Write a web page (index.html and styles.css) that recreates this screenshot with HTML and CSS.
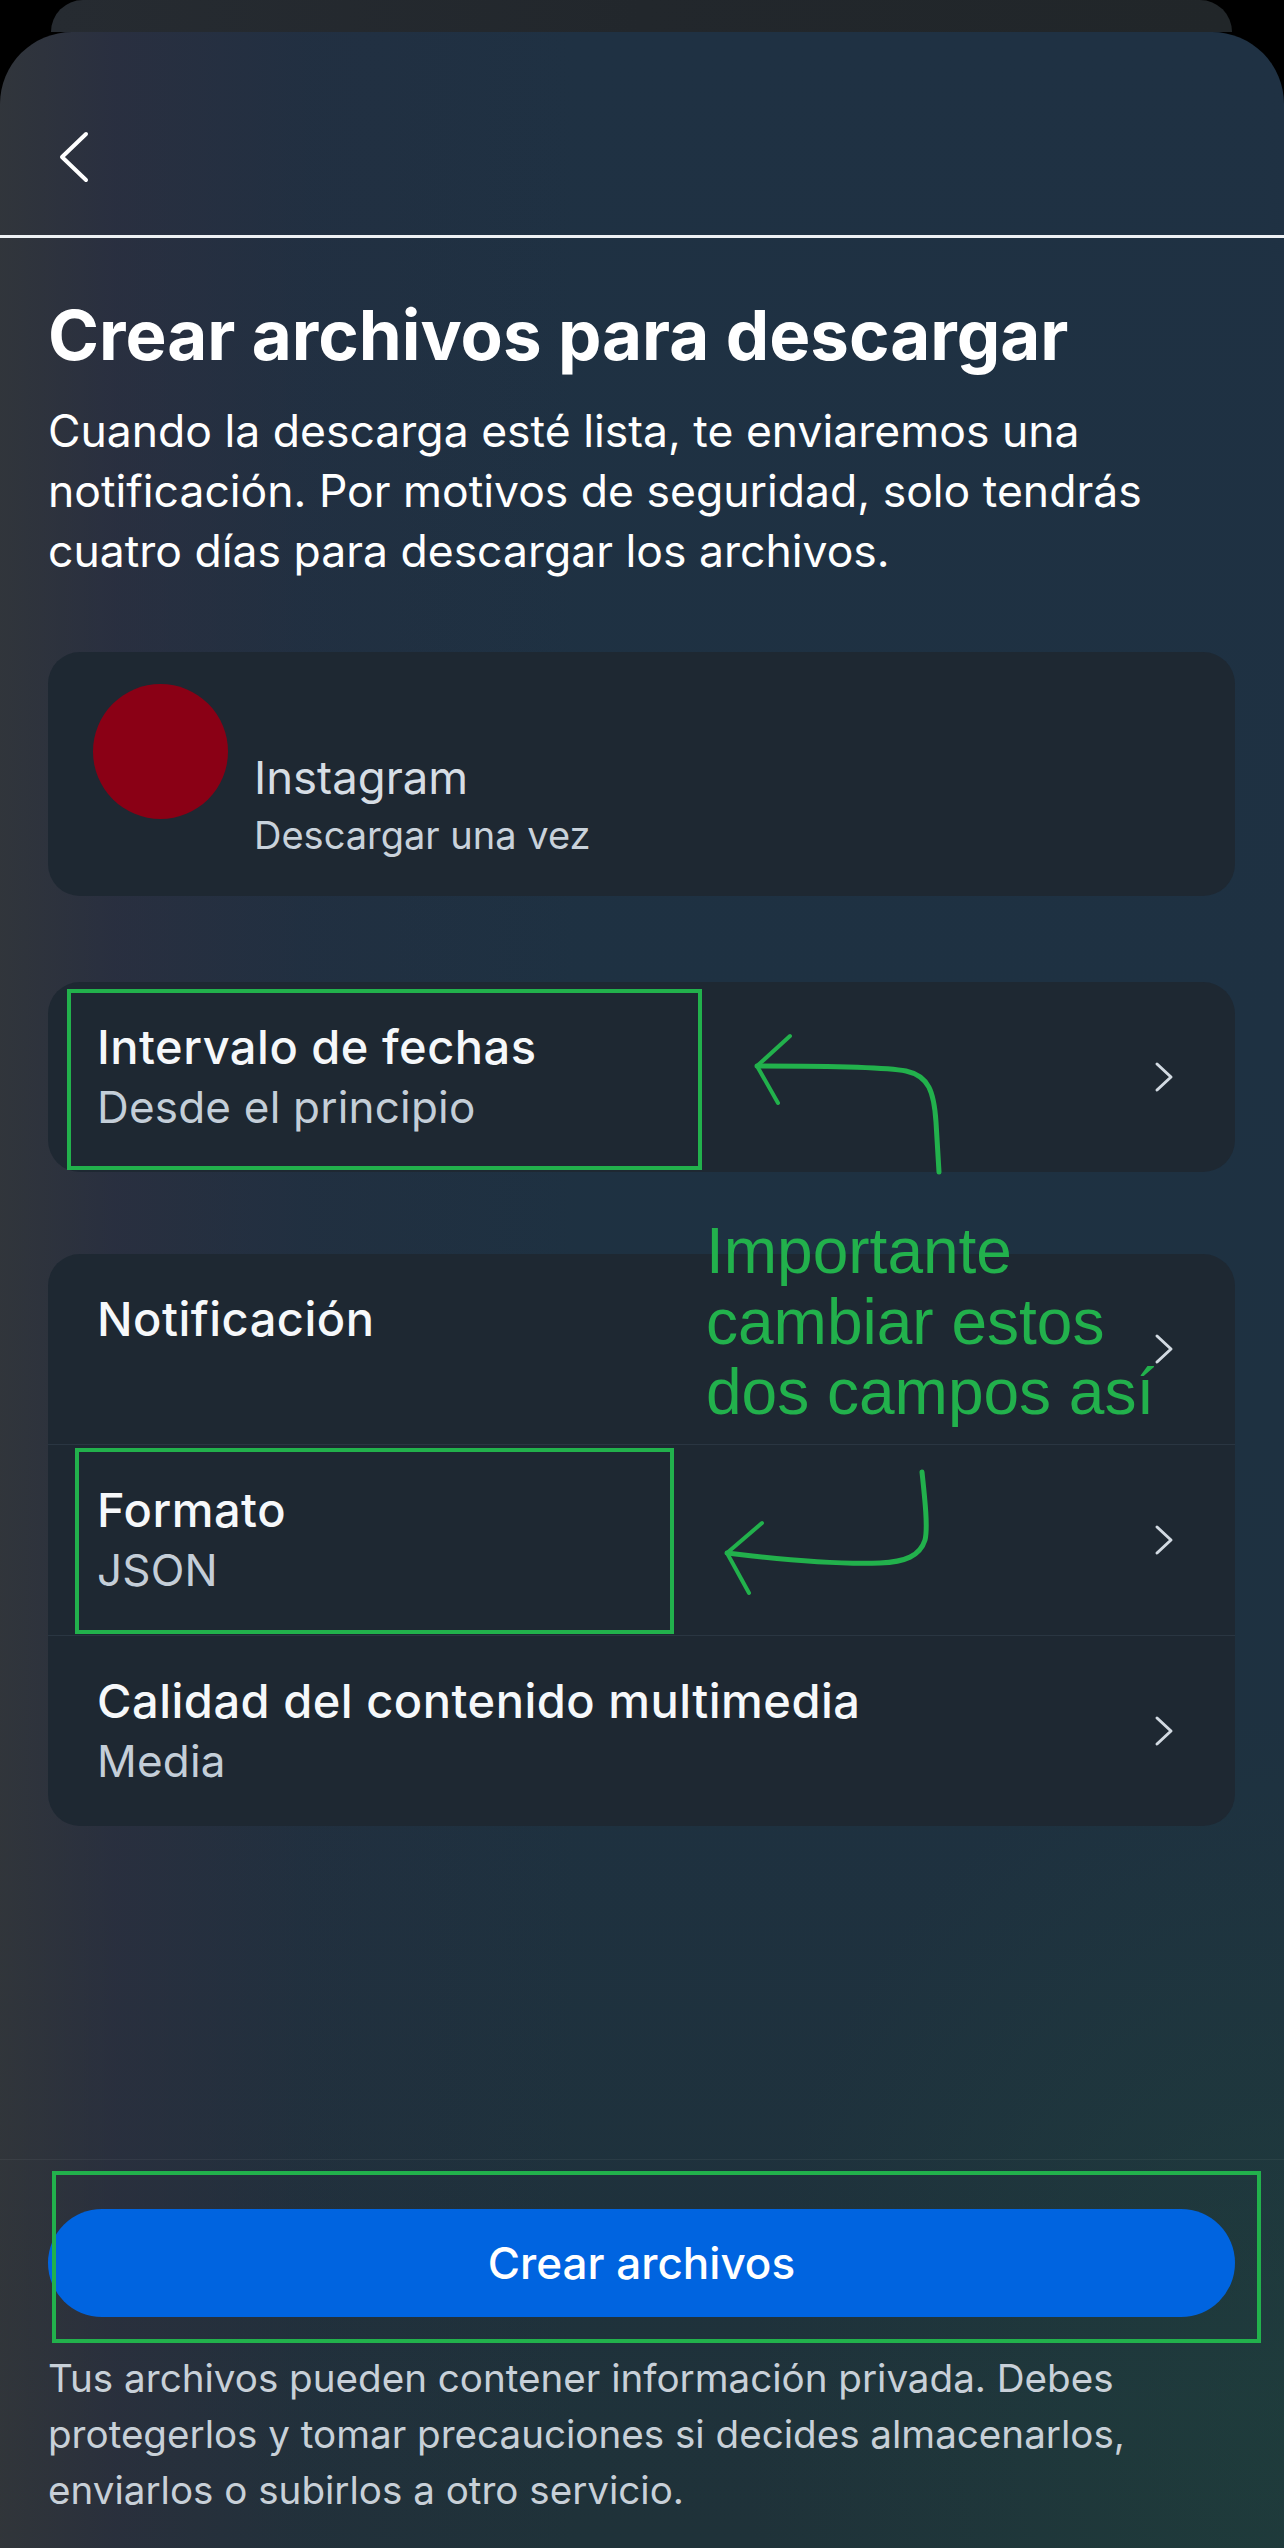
FILE: index.html
```html
<!DOCTYPE html>
<html lang="es">
<head>
<meta charset="utf-8">
<title>Crear archivos para descargar</title>
<link rel="stylesheet" href="styles.css">
</head>
<body>
<div class="screen">
  <div class="peek"></div>
  <main class="sheet">
    <header class="sheet-header">
      <svg class="back" viewBox="0 0 32 52" width="32" height="52" aria-label="Atrás"><path d="M29 3 L5 26 L29 49"/></svg>
    </header>
    <section class="content">
      <h1 class="title">Crear archivos para descargar</h1>
      <p class="lead">Cuando la descarga esté lista, te enviaremos una notificación. Por motivos de seguridad, solo tendrás cuatro días para descargar los archivos.</p>

      <div class="account-card">
        <div class="avatar"></div>
        <div class="account-text">
          <div class="account-name">Instagram</div>
          <div class="account-sub">Descargar una vez</div>
        </div>
      </div>

      <div class="list list-single">
        <div class="row">
          <div class="row-text">
            <div class="row-title">Intervalo de fechas</div>
            <div class="row-sub">Desde el principio</div>
          </div>
          <svg class="chev" viewBox="0 0 20 32" width="20" height="32"><path d="M3 3 L17 16 L3 29"/></svg>
        </div>
      </div>

      <div class="list list-group">
        <div class="row">
          <div class="row-text">
            <div class="row-title">Notificación</div>
            <div class="row-sub">&nbsp;</div>
          </div>
          <svg class="chev" viewBox="0 0 20 32" width="20" height="32"><path d="M3 3 L17 16 L3 29"/></svg>
        </div>
        <div class="row">
          <div class="row-text">
            <div class="row-title">Formato</div>
            <div class="row-sub">JSON</div>
          </div>
          <svg class="chev" viewBox="0 0 20 32" width="20" height="32"><path d="M3 3 L17 16 L3 29"/></svg>
        </div>
        <div class="row">
          <div class="row-text">
            <div class="row-title">Calidad del contenido multimedia</div>
            <div class="row-sub">Media</div>
          </div>
          <svg class="chev" viewBox="0 0 20 32" width="20" height="32"><path d="M3 3 L17 16 L3 29"/></svg>
        </div>
      </div>
    </section>

    <footer class="sheet-footer">
      <button class="primary" type="button">Crear archivos</button>
      <p class="note">Tus archivos pueden contener información privada. Debes protegerlos y tomar precauciones si decides almacenarlos, enviarlos o subirlos a otro servicio.</p>
    </footer>
  </main>

  <div class="annotations">
    <svg class="marks" viewBox="0 0 1284 2548" width="1284" height="2548">
      <rect class="box" x="69" y="991" width="631" height="177"/>
      <rect class="box" x="77" y="1450" width="595" height="182"/>
      <rect class="box" x="54" y="2173" width="1205" height="168"/>
      <path class="arrow" d="M939 1172 L936 1122 C934 1092 929 1076 906 1071 C880 1066 800 1066 757 1066"/>
      <path class="arrow-head" d="M790 1036 L757 1066 L778 1103"/>
      <path class="arrow" d="M922 1472 C925 1500 928 1528 925 1540 C920 1556 905 1562 880 1563 C850 1564 800 1562 727 1553"/>
      <path class="arrow-head" d="M762 1523 L727 1553 L749 1593"/>
    </svg>
    <div class="callout">Importante<br>cambiar estos<br>dos campos así</div>
  </div>
</div>
</body>
</html>
```

FILE: styles.css
```css
* { box-sizing: border-box; }

html, body {
  margin: 0;
  padding: 0;
  background: #000;
}

body {
  width: 1284px;
  height: 2548px;
  overflow: hidden;
  font-family: "Inter", "Open Sans", "Liberation Sans", sans-serif;
  color: #fff;
}

.screen {
  position: relative;
  width: 1284px;
  height: 2548px;
  background: #000;
}

.peek {
  height: 32px;
  margin: 0 52px 0 51px;
  border-radius: 40px 40px 0 0;
  background: linear-gradient(90deg, #262b31 0%, #22272c 50%, #212629 100%);
}

.sheet {
  height: 2516px;
  display: flex;
  flex-direction: column;
  border-radius: 72px 72px 0 0;
  overflow: hidden;
  background:
    radial-gradient(ellipse 60% 40% at 100% 95%, rgba(30, 74, 62, 0.4), rgba(30, 74, 62, 0) 70%),
    linear-gradient(90deg, rgba(52, 54, 58, 0.85) 0%, rgba(48, 46, 62, 0.6) 9%, rgba(40, 44, 62, 0.28) 24%, rgba(30, 48, 66, 0) 45%),
    linear-gradient(180deg, #1f3143 0%, #1e3142 40%, #1e3140 70%, #1f3239 100%);
}

.sheet-header {
  padding: 99px 0 52px 57px;
  border-bottom: 3px solid #eef1f4;
}

.back {
  display: block;
}
.back path {
  fill: none;
  stroke: #ffffff;
  stroke-width: 4;
  stroke-linecap: round;
  stroke-linejoin: round;
}

.content {
  padding: 0 49px 0 48px;
}

.title {
  margin: 57px 0 0;
  font-size: 69px;
  line-height: 80px;
  font-weight: 700;
  color: #ffffff;
  white-space: nowrap;
}

.lead {
  margin: 26px 0 0;
  font-size: 44.5px;
  line-height: 60px;
  font-weight: 400;
  color: #ffffff;
}

.account-card {
  margin-top: 71px;
  display: flex;
  align-items: flex-start;
  gap: 26px;
  padding: 32px 45px;
  border-radius: 32px;
  background: #1e2832;
}

.avatar {
  width: 135px;
  height: 135px;
  flex: none;
  border-radius: 50%;
  background: #8a0015;
}

.account-text {
  padding-top: 65px;
}

.account-name {
  font-size: 45.5px;
  line-height: 58px;
  color: #d6dde4;
}

.account-sub {
  font-size: 38px;
  line-height: 57px;
  color: #c9d2db;
}

.list {
  border-radius: 32px;
  background: #1e2832;
  overflow: hidden;
}

.list-single {
  margin-top: 86px;
}

.list-group {
  margin-top: 82px;
}

.row {
  display: flex;
  align-items: center;
  justify-content: space-between;
  padding: 35px 61px 35px 49px;
}

.row + .row {
  border-top: 1px solid #2a3642;
}

.row-title {
  font-size: 47px;
  line-height: 60px;
  font-weight: 500;
  letter-spacing: 0.5px;
  color: #f6f8fa;
}

.row-sub {
  font-size: 44px;
  line-height: 60px;
  letter-spacing: 0.2px;
  color: #c4ced8;
}

.chev {
  flex: none;
  display: block;
}
.chev path {
  fill: none;
  stroke: #d2dae2;
  stroke-width: 3;
  stroke-linecap: round;
  stroke-linejoin: round;
}

.sheet-footer {
  margin-top: auto;
  border-top: 1px solid rgba(255, 255, 255, 0.05);
  padding: 49px 49px 30px 48px;
}

.primary {
  display: block;
  width: 100%;
  height: 108px;
  border: 0;
  border-radius: 54px;
  background: #0064e0;
  color: #ffffff;
  font-family: "Inter", "Open Sans", "Liberation Sans", sans-serif;
  font-size: 44px;
  font-weight: 500;
  padding: 0;
}

.note {
  margin: 33px 0 0;
  font-size: 38.6px;
  line-height: 56px;
  color: #c8d0d8;
}

.annotations {
  position: absolute;
  left: 0;
  top: 0;
  width: 1284px;
  height: 2548px;
  pointer-events: none;
}

.marks {
  position: absolute;
  left: 0;
  top: 0;
}

.box {
  fill: none;
  stroke: #22b14c;
  stroke-width: 4;
}

.arrow {
  fill: none;
  stroke: #22b14c;
  stroke-width: 5;
  stroke-linecap: round;
  stroke-linejoin: round;
}

.arrow-head {
  fill: none;
  stroke: #22b14c;
  stroke-width: 4;
  stroke-linecap: round;
  stroke-linejoin: round;
}

.callout {
  position: absolute;
  left: 706px;
  top: 1216px;
  font-family: "Liberation Sans", Arial, sans-serif;
  font-size: 64px;
  line-height: 70.5px;
  color: #22b14c;
  white-space: nowrap;
}
```
